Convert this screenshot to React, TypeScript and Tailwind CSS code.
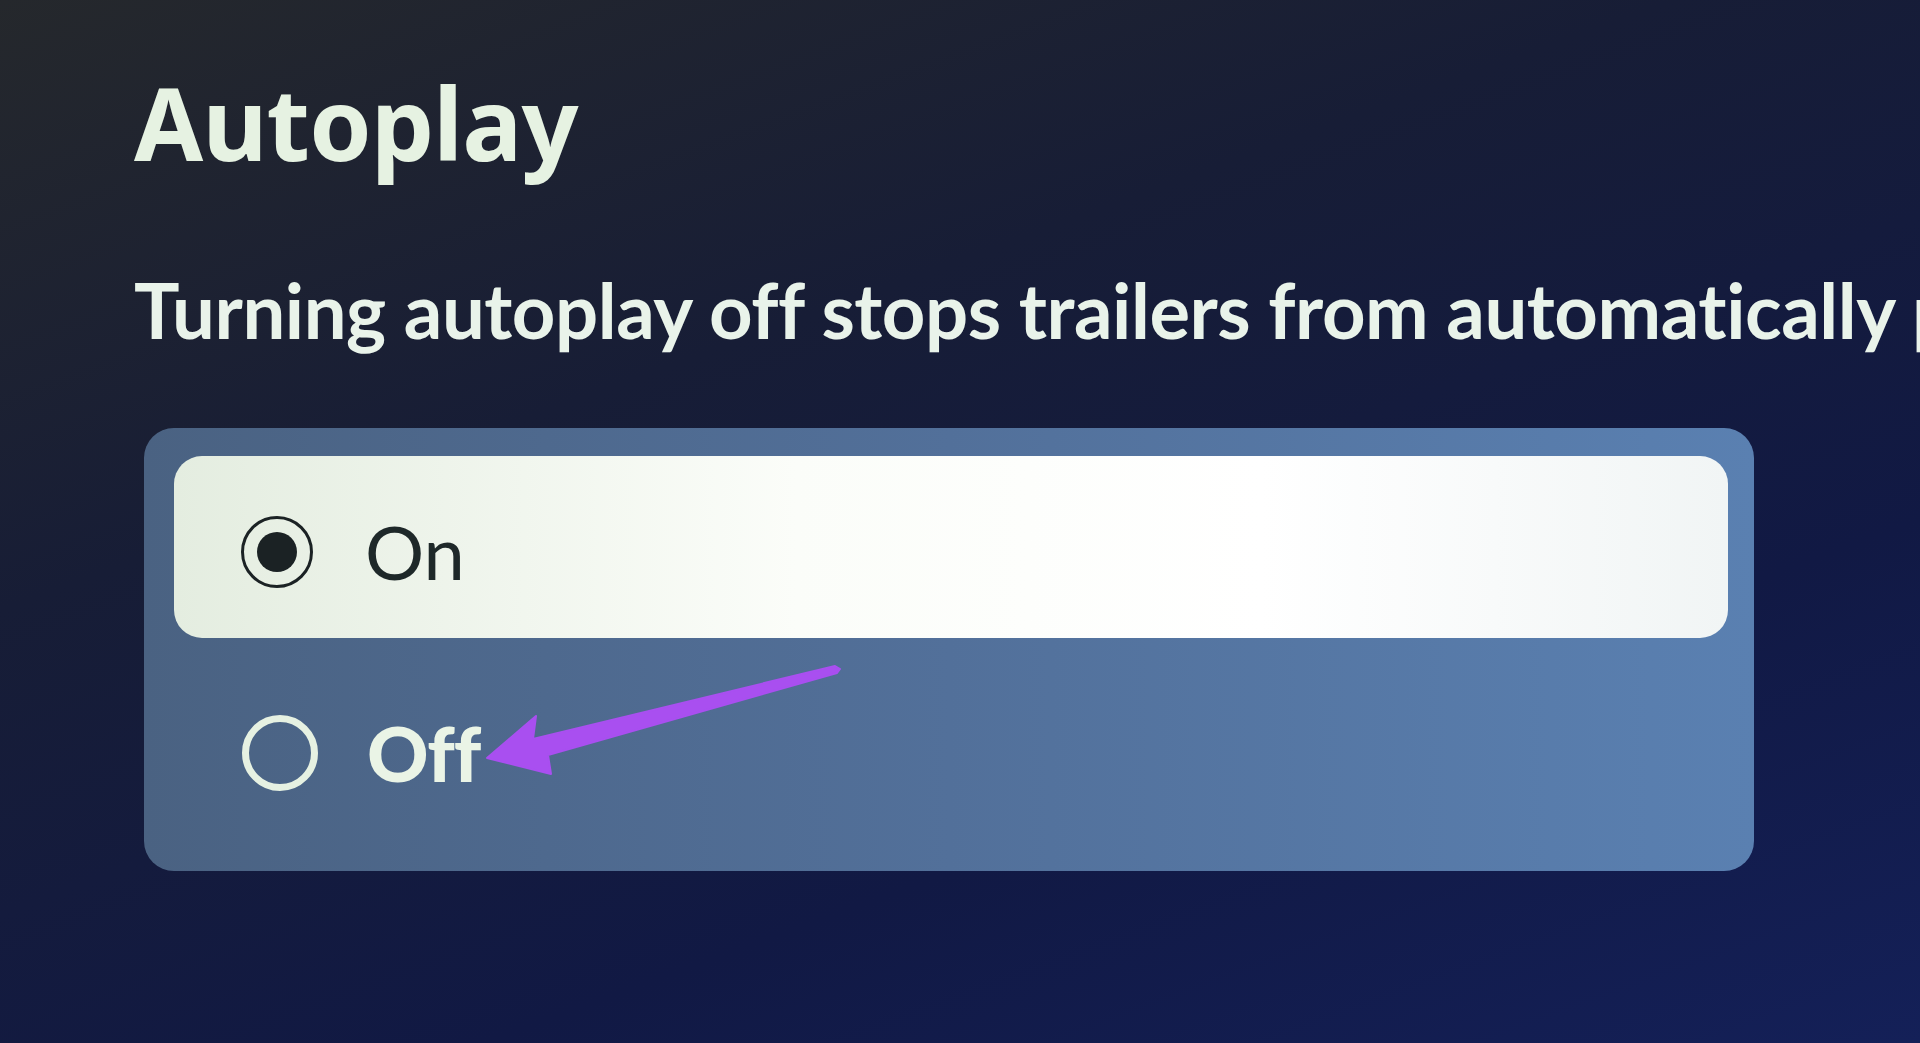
export default function App() {
  return (
    <div className="relative h-[1043px] w-[1920px] overflow-hidden bg-[linear-gradient(160deg,#25282c_0%,#171d36_35%,#111944_70%,#142058_100%)] font-['Lato','Liberation_Sans',sans-serif]">
      <div className="flex flex-col pl-[134px] pt-[72px]">
        <h1 className="font-['Noto_Sans','Lato',sans-serif] text-[100px] font-bold leading-none tracking-[-0.8px] text-[#e6f2e2]">
          Autoplay
        </h1>

        <p className="mt-[100px] whitespace-nowrap text-[76px] font-bold leading-none tracking-[-0.45px] text-[#e9f3ea]">
          Turning autoplay off stops trailers from automatically playing.
        </p>

        <div className="ml-[10px] mt-[80px] flex w-[1610px] flex-col gap-[25px] rounded-[30px] bg-[linear-gradient(90deg,#4a6282_0%,#52709a_50%,#5a80b1_100%)] p-[28px] pl-[30px] pr-[26px]">
          <div className="flex h-[182px] items-center gap-[52px] rounded-[28px] bg-[linear-gradient(90deg,#e4ede0_0%,#fbfdf9_40%,#ffffff_70%,#f1f5f5_100%)] pl-[67px] pt-[10px]">
            <span className="flex h-[72px] w-[72px] items-center justify-center rounded-full border-[3px] border-[#1b2224]">
              <span className="h-[40px] w-[40px] rounded-full bg-[#1b2224]" />
            </span>
            <span className="text-[74px] font-normal leading-none text-[#1e2829]">On</span>
          </div>

          <div className="flex h-[180px] items-center gap-[49px] pl-[68px]">
            <span className="h-[76px] w-[76px] rounded-full border-[7px] border-[#e6f1e2]" />
            <span className="text-[76px] font-black leading-none tracking-[-1px] text-[#eaf4e6]">Off</span>
          </div>
        </div>
      </div>

      {/* annotation arrow */}
      <svg className="pointer-events-none absolute left-0 top-0" width="1920" height="1043" viewBox="0 0 1920 1043">
        <polygon
          points="487,758 536,716 533,739 835,666 840,669 837,673 548,755 551,774"
          fill="#a94ff0"
          stroke="#a94ff0"
          strokeWidth="2"
          strokeLinejoin="round"
        />
      </svg>
    </div>
  );
}
